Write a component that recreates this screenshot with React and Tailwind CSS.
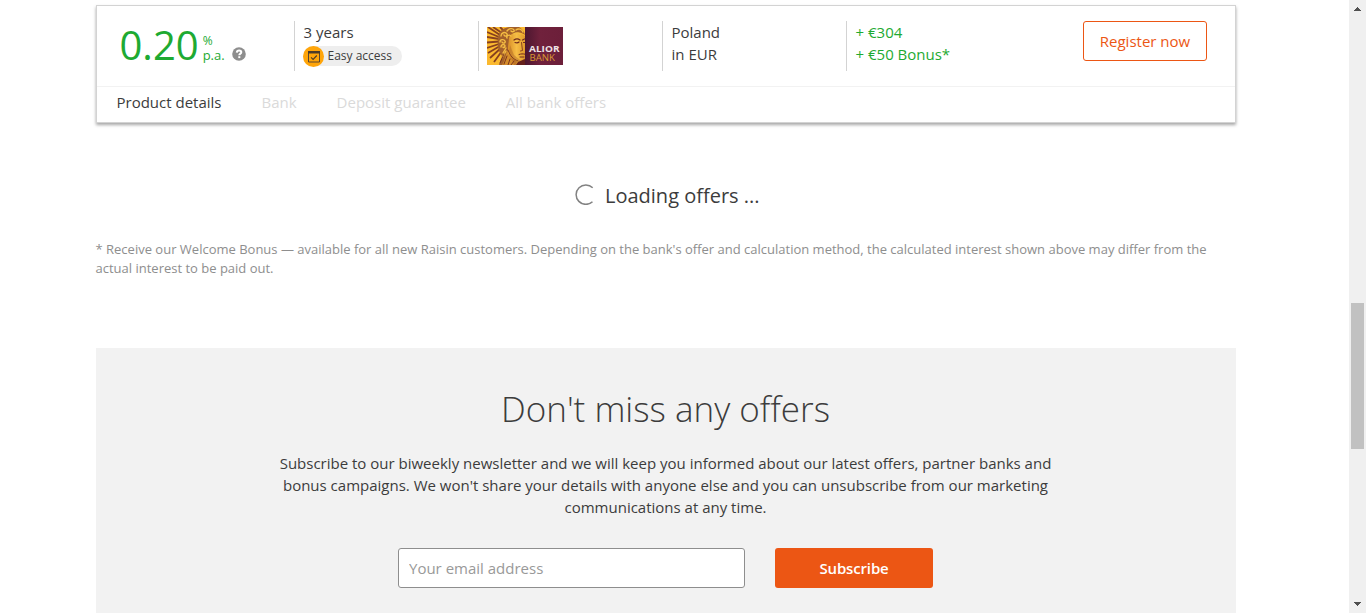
const tabs = ['Bank', 'Deposit guarantee', 'All bank offers'];

function HelpIcon() {
  return (
    <svg className="h-[14px] w-[14px]" viewBox="0 0 14 14">
      <circle cx="7" cy="7" r="6.8" fill="#8e8e8e" />
      <path d="M4.800 5.600C4.900 4 5.900 3.500 7.100 3.500c1.300 0 2.200.7 2.200 1.700 0 1.400-2 1.400-2 3" fill="none" stroke="#fff" strokeWidth="2" />
      <rect x="6.300" y="9.200" width="2" height="1.900" fill="#fff" />
    </svg>
  );
}

function EasyAccessIcon() {
  return (
    <svg className="h-[21px] w-[21px] shrink-0" viewBox="0 0 21 21">
      <circle cx="10.5" cy="10.5" r="10.5" fill="#ffa50a" />
      <path d="M5.500 5.500h11v10.500h-11z" fill="none" stroke="#5a4630" strokeWidth="1" />
      <path d="M5 5h12v2.500H5z" fill="#4a3a2a" />
      <path d="M8 11.300l2.100 2.100 3.700-3.900" fill="none" stroke="#4a3a2a" strokeWidth="1.100" />
    </svg>
  );
}

function AliorLogo() {
  return (
    <svg className="block h-[38px] w-[76px]" viewBox="0 0 76 38">
      <defs>
        <linearGradient id="wine" x1="0" x2="1">
          <stop offset="0" stopColor="#4c1730" />
          <stop offset=".4" stopColor="#70213c" />
          <stop offset="1" stopColor="#6c1f3a" />
        </linearGradient>
        <linearGradient id="skin" x1="0" x2="1">
          <stop offset="0" stopColor="#d98f28" />
          <stop offset=".5" stopColor="#f6bd45" />
          <stop offset="1" stopColor="#e09a2a" />
        </linearGradient>
        <clipPath id="portrait"><path d="M0 0h38v38H0z" /></clipPath>
      </defs>
      <path d="M38 0h38v38H38z" fill="url(#wine)" />
      <g clipPath="url(#portrait)">
        <path d="M0 0h38v38H0z" fill="#fbb92f" />
        <path d="M1 0l12 8M6 0l9 6M13 0l4 4M0 5l12 5M0 10l12 2M0 15.500l12-1M0 21l12-4M1 26l12-7M3 31l11-10M7 35l8-11" fill="none" stroke="#87401f" strokeWidth="1.800" />
        <path d="M12 7c2-5 7-7 13-7h7c3 2 5 4 6 8-3-2-5-3-8-2-5 0-8 4-8 9l-1 9c-1 4 0 8 1 14H12l3-9c-2-3-4-6-4-10 0-5-1-8 1-12z" fill="#a3602a" />
        <path d="M22 11c1-4 4-5 8-5 3 0 6 2 8 3v22c-2 3-5 4-7 3-5-2-9-7-10-12z" fill="url(#skin)" />
        <path d="M20 23c2 5 5 9 10 11l-1 4H15c3-5 4-10 5-15z" fill="#d58d2b" />
        <g fill="none" stroke="#f5bd43" strokeWidth="1.400" strokeLinecap="round">
          <path d="M14 9c0-3 4-5 6-2 1 2-2 3-3 1M20 4c2-3 6-3 7-1 1 2-2 2-3 1M29 3c2-2 6-1 7 2M13 15c0-3 4-3 5-1 1 2-2 3-3 1M14 20c0-3 4-3 4-1s-2 2-2 1M20 11c-1-2 2-4 4-2M16 26l3-5M15 31l4-7M27 7c2-2 5-1 6 0" />
        </g>
        <g fill="none" stroke="#6f2a1c" strokeLinecap="round">
          <path d="M27 13c2-1.500 4-1.500 6 0M35.500 13l2-1" strokeWidth="1.200" />
          <path d="M28 15.500c2 .8 3 .5 4-.5M36.500 15.500h1.500" strokeWidth="1.100" />
          <path d="M34.500 15.500l1 8-2 .5" strokeWidth=".8" />
          <path d="M32 27.500c2-.8 4-.8 6-.3M33 30h4" strokeWidth="1" />
          <path d="M21 23c2 6 5 9 10 11M17 27l-4 9M20 29l-3 8M23 32l-2 6M27 34l-3 4" strokeWidth=".9" />
        </g>
        <path d="M23 18l4 10 7 6 4-3v7H27l-5-12z" fill="#8a421f" opacity=".3" />
        <path d="M31 35l7-3v6H29z" fill="#65211c" />
      </g>
      <text x="42" y="24.800" textLength="30.500" lengthAdjust="spacingAndGlyphs" fill="#eee3e6" fontFamily="Open Sans, sans-serif" fontWeight="700" fontSize="9.200">ALIOR</text>
      <text x="42.500" y="33.900" textLength="25.500" lengthAdjust="spacingAndGlyphs" fill="#d99a32" fontFamily="Open Sans, sans-serif" fontSize="8.800">BANK</text>
    </svg>
  );
}

function OfferCard() {
  return (
    <section className="flex h-[118px] flex-col border border-[#d3d3d3] bg-white shadow-[0_2px_3px_rgba(0,0,0,0.35)]">
      <div className="flex h-[81px] shrink-0 border-b border-[#f2f2f2] pt-[15px] text-[15px] leading-[22px]">
        <div className="flex w-[197px] pl-[22.5px] text-[#1eaa32]">
          <span className="text-[40px] leading-[48px]">0.20</span>
          <span className="ml-1 mt-[12px] flex flex-col">
            <span className="text-[12px] leading-[15px]">%</span>
            <span className="text-[13px] leading-[14px]">p.a.</span>
          </span>
          <span className="ml-[7px] mt-[26px]"><HelpIcon /></span>
        </div>
        <div className="h-[50px] w-[184px] border-l border-[#d3d3d3] pl-2">
          <div className="pl-[0.5px]">3 years</div>
          <div className="mt-[3px] flex h-5 w-[99px] items-center rounded-full bg-[#eee]">
            <EasyAccessIcon />
            <span className="ml-[3.5px] text-[12px] leading-5">Easy access</span>
          </div>
        </div>
        <div className="h-[50px] w-[184px] border-l border-[#d3d3d3] pl-2 pt-[6px]"><AliorLogo /></div>
        <div className="h-[50px] w-[184px] border-l border-[#d3d3d3] pl-[8.5px]">
          <div>Poland</div>
          <div>in EUR</div>
        </div>
        <div className="h-[50px] w-[237px] border-l border-[#d3d3d3] pl-[8.5px] text-[#1eaa32]">
          <div>+ €304</div>
          <div>+ €50 Bonus*</div>
        </div>
        <button className="h-10 w-[124px] rounded-[3px] border border-[#ec5614] text-[15px] text-[#ec5614]">Register now</button>
      </div>
      <nav className="flex gap-10 pl-[19.5px] pt-1 text-[15px] leading-[22px] text-[#dadada]">
        <span className="text-[#3c3c3c]">Product details</span>
        {tabs.map((tab) => <span key={tab}>{tab}</span>)}
      </nav>
    </section>
  );
}

function Newsletter() {
  return (
    <section className="mt-[70px] flex h-[265px] flex-col items-center bg-[#f2f2f2] pr-px pt-[36px] text-center">
      <h2 className="text-[35px] font-light leading-[50px]">Don't miss any offers</h2>
      <p className="mt-[18px] text-[15px] leading-[22px]">
        Subscribe to our biweekly newsletter and we will keep you informed about our latest offers, partner banks and<br />
        bonus campaigns. We won't share your details with anyone else and you can unsubscribe from our marketing<br />
        communications at any time.
      </p>
      <form className="mt-[30px] flex gap-[30px] text-[15px]">
        <input
          placeholder="Your email address"
          className="h-10 w-[347px] rounded-[3px] border border-[#8e8e8e] bg-white px-[10px] placeholder:text-[#999]"
        />
        <button type="button" className="h-10 w-[158px] rounded-[3px] bg-[#ec5614] font-semibold tracking-[-0.15px] text-white">Subscribe</button>
      </form>
    </section>
  );
}

function Scrollbar() {
  return (
    <aside className="flex h-full w-[17px] flex-col items-center bg-[#f0f0f0]">
      <svg className="h-[17px] w-[17px]" viewBox="0 0 17 17" shapeRendering="crispEdges"><path d="M5 11V10h1V9h1V8h1V7h1v1h1v1h1v1h1v1z" fill="#505050" /></svg>
      <div className="mt-[286px] h-[146px] w-[13px] bg-[#c1c1c1]" />
      <svg className="mt-auto h-[17px] w-[17px]" viewBox="0 0 17 17" shapeRendering="crispEdges"><path d="M5 6v1h1v1h1v1h1v1h1V9h1V8h1V7h1V6z" fill="#505050" /></svg>
    </aside>
  );
}

export default function App() {
  return (
    <div className="flex h-[613px] w-[1366px] justify-between overflow-hidden whitespace-nowrap bg-white font-['Open_Sans',sans-serif] text-[#3c3c3c]">
      <main className="ml-24 w-[1140px] pt-[5px]">
        <OfferCard />
        <div className="mt-[57px] flex h-[30px] items-center gap-[9px] pl-[479px]">
          <svg className="-mt-px h-[21px] w-[21px]" viewBox="0 0 21 21">
            <path d="M17.700 3.800A9.700 9.700 0 1 0 17.500 17.700" fill="none" stroke="#828282" strokeWidth="1.500" />
          </svg>
          <span className="pt-[2px] text-[20px]">Loading offers ...</span>
        </div>
        <p className="-ml-[0.5px] mt-[30px] text-[13px] leading-[19px] text-[#8e8e8e]">
          * Receive our Welcome Bonus — available for all new Raisin customers. Depending on the bank's offer and calculation method, the calculated interest shown above may differ from the<br />
          actual interest to be paid out.
        </p>
        <Newsletter />
      </main>
      <Scrollbar />
    </div>
  );
}
